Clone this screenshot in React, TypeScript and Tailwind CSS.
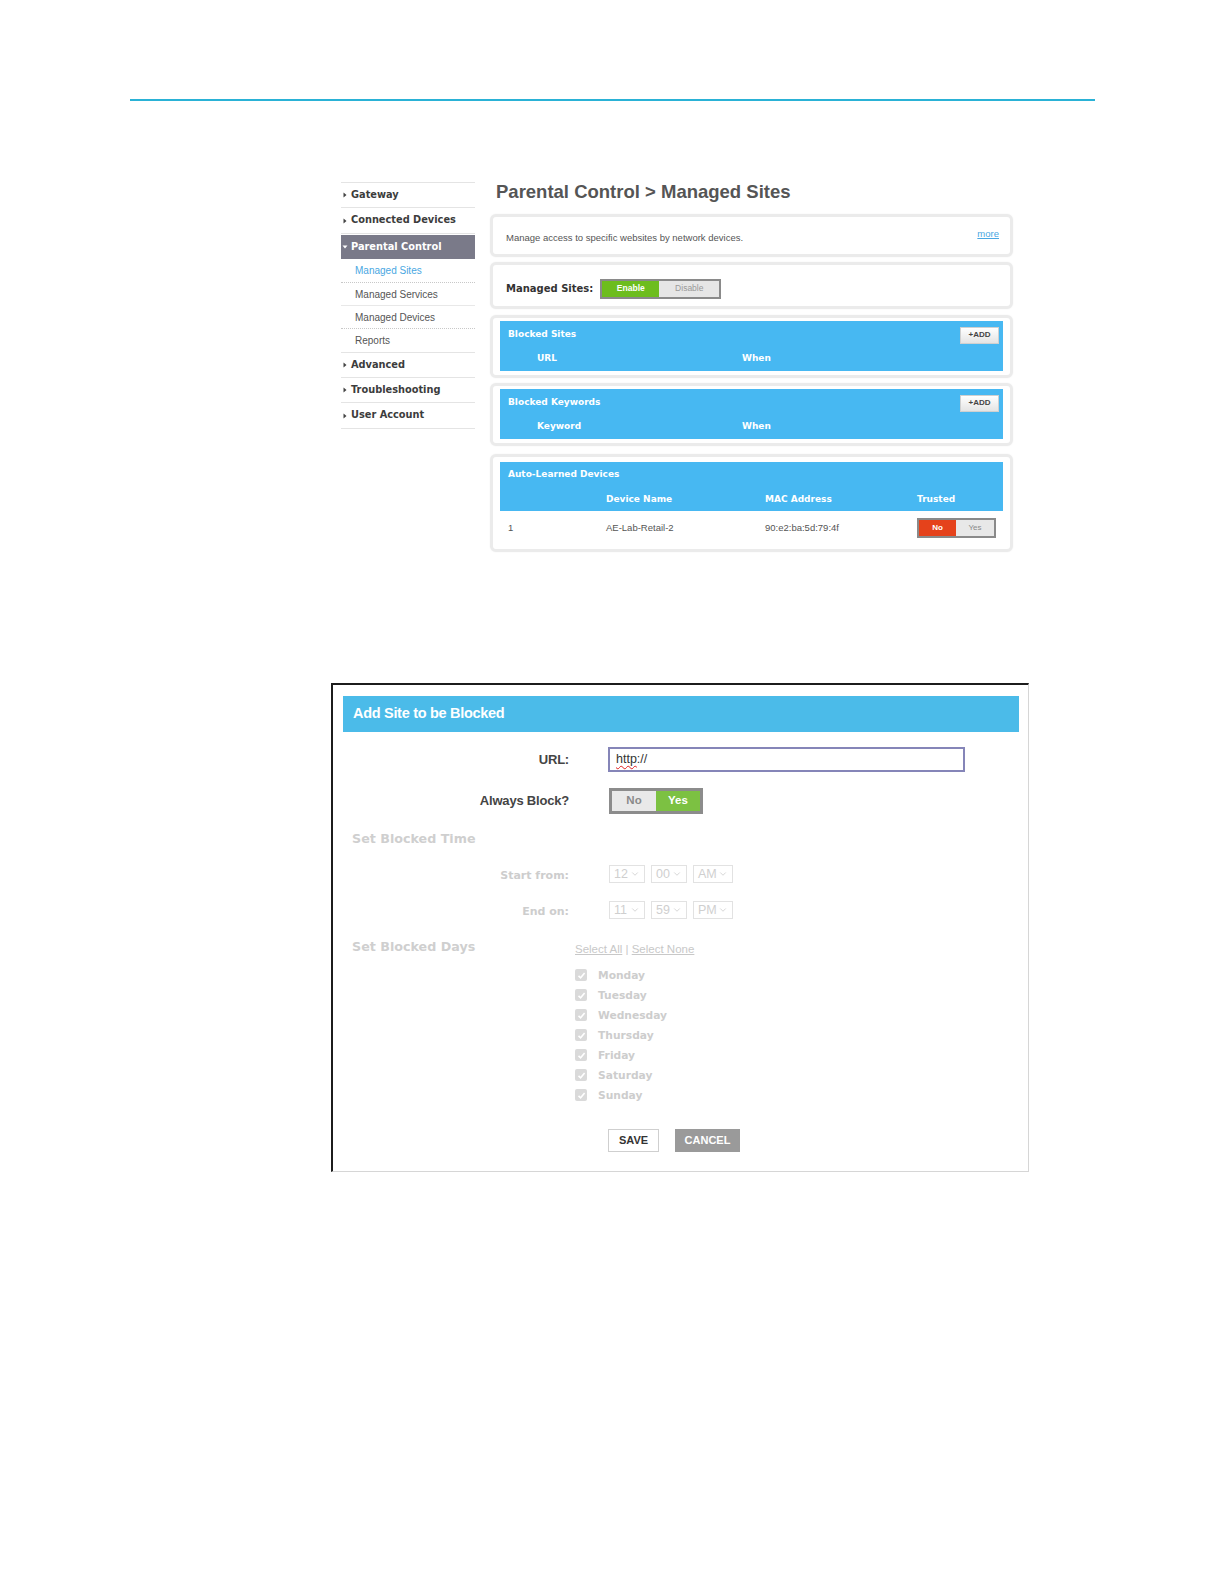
import { ChevronDown } from "lucide-react";

const dv = "font-['DejaVu_Sans',sans-serif]";
const ar = "font-['Liberation_Sans',Arial,sans-serif]";

function Arrow({ open }: { open?: boolean }) {
  return open ? (
    <svg width="6" height="6" viewBox="0 0 6 6" className="mr-[3px]">
      <path d="M0.5 1.5 L5.5 1.5 L3 4.5 Z" fill="#fff" />
    </svg>
  ) : (
    <svg width="6" height="6" viewBox="0 0 6 6" className="mr-[3px]">
      <path d="M1.5 0.5 L4.5 3 L1.5 5.5 Z" fill="#444" />
    </svg>
  );
}

function Sidebar() {
  const top = `flex items-center pl-[1px] border-b border-[#e4e4e4] text-[9.8px] font-bold text-[#3c3c3c] ${dv}`;
  const sub = `flex items-center pl-[14px] text-[10px] ${ar}`;
  return (
    <div className="w-[134px] mt-[2px] border-t border-[#e4e4e4]">
      <div className={`${top} h-[25px]`}>
        <Arrow />
        Gateway
      </div>
      <div className={`${top} h-[26px]`}>
        <Arrow />
        Connected Devices
      </div>
      <div className="mt-px h-[24px] flex items-center pl-[1px] bg-[#7a7a89] text-white text-[9.8px] font-bold font-['DejaVu_Sans',sans-serif]">
        <Arrow open />
        Parental Control
      </div>
      <div className={`${sub} h-[24px] border-b border-dotted border-[#c8c8c8] text-[#49a7e2]`}>Managed Sites</div>
      <div className={`${sub} h-[23px] border-b border-[#e8e8e8] text-[#555]`}>Managed Services</div>
      <div className={`${sub} h-[23px] border-b border-dotted border-[#c8c8c8] text-[#555]`}>Managed Devices</div>
      <div className={`${sub} h-[24px] border-b border-[#e4e4e4] text-[#555]`}>Reports</div>
      <div className={`${top} h-[25px]`}>
        <Arrow />
        Advanced
      </div>
      <div className={`${top} h-[25px]`}>
        <Arrow />
        Troubleshooting
      </div>
      <div className={`${top} h-[26px]`}>
        <Arrow />
        User Account
      </div>
    </div>
  );
}

function Box({ children, className = "" }: { children: React.ReactNode; className?: string }) {
  return (
    <div className={`rounded-[6px] border-[3px] border-[#ebebeb] bg-white shadow-[0_0_2px_rgba(0,0,0,0.06)] ${className}`}>
      {children}
    </div>
  );
}

function AddBtn() {
  return (
    <div className={`w-[39px] h-[17px] flex items-center justify-center bg-gradient-to-b from-white to-[#e4e4e4] border border-[#d0d0d0] text-[8px] text-[#444] ${ar}`}>
      +ADD
    </div>
  );
}

function BluePanel({ title, col1 }: { title: string; col1: string }) {
  return (
    <div className={`bg-[#47b8f2] h-[50px] text-white font-bold text-[9px] ${dv}`}>
      <div className="h-[26px] flex items-center justify-between pl-[8px] pr-[4px] pt-[2px]">
        <span>{title}</span>
        <AddBtn />
      </div>
      <div className="h-[24px] flex items-center">
        <span className="ml-[37px] w-[205px]">{col1}</span>
        <span>When</span>
      </div>
    </div>
  );
}

function ManagedSites() {
  return (
    <div className="mt-[79px] ml-[341px] flex">
      <Sidebar />
      <div className="ml-[15px] w-[523px]">
        <div className={`h-[24px] leading-[24px] pl-[6px] text-[18.5px] font-bold text-[#555] ${ar}`}>
          Parental Control &gt; Managed Sites
        </div>
        <Box className="mt-[10px] h-[43px]">
          <div className={`h-full flex items-center justify-between pl-[13px] pr-[11px] ${ar}`}>
            <span className="text-[9.5px] text-[#555] mt-[5px]">
              Manage access to specific websites by network devices.
            </span>
            <span className="text-[9.5px] text-[#49a7e2] underline -mt-[3px]">more</span>
          </div>
        </Box>
        <Box className="mt-[5px] h-[47px]">
          <div className="h-full flex items-center pl-[13px] pt-[6px]">
            <span className={`text-[10px] font-bold text-[#333] ${dv}`}>Managed Sites:</span>
            <div className={`ml-[7px] flex h-[20px] border-2 border-[#8a8a8a] text-[8.5px] ${ar}`}>
              <div className="w-[57px] flex items-center justify-center bg-[#6dbd1e] text-white font-bold">Enable</div>
              <div className="w-[60px] flex items-center justify-center bg-[#e6e6e6] text-[#999]">Disable</div>
            </div>
          </div>
        </Box>
        <Box className="mt-[6px] px-[7px] pt-[3px] pb-[4px]">
          <BluePanel title="Blocked Sites" col1="URL" />
        </Box>
        <Box className="mt-[5px] px-[7px] pt-[3px] pb-[4px]">
          <BluePanel title="Blocked Keywords" col1="Keyword" />
        </Box>
        <Box className="mt-[8px] px-[7px] pt-[5px] pb-[4px]">
          <div className={`bg-[#47b8f2] h-[49px] text-white font-bold text-[9px] ${dv}`}>
            <div className="h-[26px] flex items-center pl-[8px]">Auto-Learned Devices</div>
            <div className="h-[23px] flex items-center">
              <span className="ml-[106px] w-[159px]">Device Name</span>
              <span className="w-[152px]">MAC Address</span>
              <span>Trusted</span>
            </div>
          </div>
          <div className={`h-[34px] flex items-center text-[9.5px] text-[#555] ${ar}`}>
            <span className="pl-[8px] w-[106px]">1</span>
            <span className="w-[159px]">AE-Lab-Retail-2</span>
            <span className="w-[152px]">90:e2:ba:5d:79:4f</span>
            <div className="flex h-[20px] border-2 border-[#8a8a8a] text-[8px]">
              <div className="w-[37px] flex items-center justify-center bg-[#e5421b] text-white font-bold">No</div>
              <div className="w-[38px] flex items-center justify-center bg-[#e8e8e8] text-[#888]">Yes</div>
            </div>
          </div>
        </Box>
      </div>
    </div>
  );
}

function Sel({ v, w }: { v: string; w: string }) {
  return (
    <div className={`${w} h-[18px] flex items-center justify-between px-[4px] border border-[#e2e2e2] text-[12.5px] text-[#cfcfcf] ${ar}`}>
      <span>{v}</span>
      <ChevronDown size={10} strokeWidth={2} color="#cfcfcf" />
    </div>
  );
}

function Check() {
  return (
    <div className="w-[12px] h-[12px] rounded-[2px] bg-[#dadada] flex items-center justify-center">
      <svg width="9" height="9" viewBox="0 0 9 9">
        <path d="M1.5 4.8 L3.6 6.8 L7.6 2" stroke="#fff" strokeWidth="1.6" fill="none" />
      </svg>
    </div>
  );
}

function AddSite() {
  const days = ["Monday", "Tuesday", "Wednesday", "Thursday", "Friday", "Saturday", "Sunday"];
  const lbl = `w-[236px] text-right text-[13px] font-bold text-[#444] tracking-[-0.2px] ${ar}`;
  const fade = `w-[236px] text-right text-[11px] font-bold text-[#cdcdcd] ${dv}`;
  return (
    <div className="mt-[131px] ml-[331px] w-[698px] border-t-2 border-l-2 border-t-[#1c1c1c] border-l-[#1c1c1c] border-r border-b border-r-[#d6d6d6] border-b-[#d6d6d6] pt-[11px] pl-[10px] pr-[9px] pb-[19px]">
      <div className={`h-[36px] bg-[#4bbbe9] flex items-center pl-[10px] text-white font-bold text-[14.5px] tracking-[-0.3px] ${ar}`}>
        Add Site to be Blocked
      </div>
      <div className="-ml-[10px]">
        <div className="mt-[15px] flex items-center h-[25px]">
          <span className={lbl}>URL:</span>
          <div className={`ml-[39px] w-[357px] h-[25px] border-2 border-[#8585b8] flex items-center pl-[6px] text-[12.5px] text-[#333] ${ar}`}>
            <span className="underline decoration-wavy decoration-[#e02020] decoration-1 underline-offset-[2px]">http</span>://
          </div>
        </div>
        <div className="mt-[16px] flex items-center h-[26px]">
          <span className={lbl}>Always Block?</span>
          <div className={`ml-[40px] flex h-[26px] border-[3px] border-[#8c8c8c] text-[11.5px] font-bold ${ar}`}>
            <div className="w-[44px] flex items-center justify-center bg-[#e9e9e9] text-[#8a8a8a]">No</div>
            <div className="w-[44px] flex items-center justify-center bg-[#7cc142] text-white">Yes</div>
          </div>
        </div>
        <div className={`mt-[15px] h-[20px] flex items-center pl-[19px] text-[12.7px] font-bold text-[#cfcfcf] ${dv}`}>
          Set Blocked Time
        </div>
        <div className="mt-[16px] flex items-center h-[18px]">
          <span className={`${fade} mt-[5px]`}>Start from:</span>
          <div className="ml-[40px] flex gap-[6px]">
            <Sel v="12" w="w-[36px]" />
            <Sel v="00" w="w-[36px]" />
            <Sel v="AM" w="w-[40px]" />
          </div>
        </div>
        <div className="mt-[18px] flex items-center h-[18px]">
          <span className={`${fade} mt-[5px]`}>End on:</span>
          <div className="ml-[40px] flex gap-[6px]">
            <Sel v="11" w="w-[36px]" />
            <Sel v="59" w="w-[36px]" />
            <Sel v="PM" w="w-[40px]" />
          </div>
        </div>
        <div className="mt-[18px] flex items-center h-[20px]">
          <span className={`w-[242px] pl-[19px] text-[12.7px] font-bold text-[#cfcfcf] ${dv}`}>Set Blocked Days</span>
          <span className={`mt-[6px] text-[11.5px] text-[#c8c8c8] ${ar}`}>
            <span className="underline">Select All</span> | <span className="underline">Select None</span>
          </span>
        </div>
        <div className="mt-[8px] ml-[242px]">
          {days.map((d) => (
            <div key={d} className="h-[20px] flex items-center">
              <Check />
              <span className={`ml-[11px] mt-[2px] text-[10.7px] font-bold text-[#cdcdcd] ${dv}`}>{d}</span>
            </div>
          ))}
        </div>
        <div className={`mt-[24px] ml-[275px] flex gap-[16px] text-[11px] font-bold ${ar}`}>
          <div className="w-[51px] h-[23px] border border-[#cfcfcf] bg-white flex items-center justify-center text-[#333]">SAVE</div>
          <div className="w-[65px] h-[23px] bg-[#9a9a9a] flex items-center justify-center text-white">CANCEL</div>
        </div>
      </div>
    </div>
  );
}

export default function App() {
  return (
    <div className="w-[1224px] h-[1584px] bg-white pt-[99px]">
      <div className="ml-[130px] w-[965px] h-[2px] bg-[#2ab2d6]" />
      <ManagedSites />
      <AddSite />
    </div>
  );
}
